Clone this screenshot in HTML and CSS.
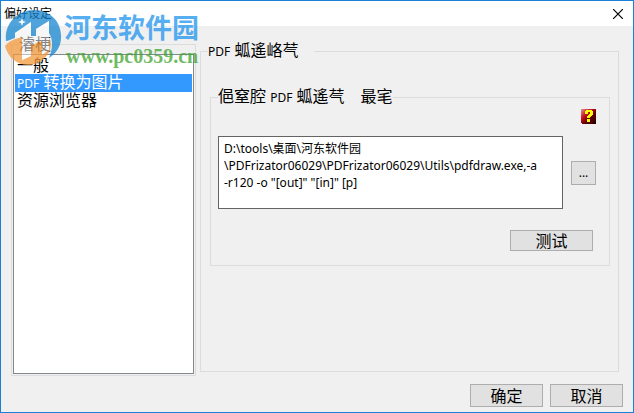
FILE: index.html
```
<!DOCTYPE html>
<html lang="zh-CN">
<head>
    <meta charset="UTF-8">
    <meta name="viewport" content="width=device-width, initial-scale=1.0">
    <title>偏好设定</title>
    <link rel="stylesheet" href="styles.css">
</head>
<body>
    <header class="titlebar">
        <h1>偏好设定</h1>
        <button class="close" type="button" aria-label="关闭">
            <svg width="10" height="10" viewBox="0 0 10 10"><path d="M0 0L10 10M10 0L0 10" stroke="#000" stroke-width="1.2"/></svg>
        </button>
    </header>

    <main class="content">
        <fieldset class="group categories">
            <legend>濬梗</legend>
            <ul class="list" role="listbox" aria-label="濬梗">
                <li role="option">一般</li>
                <li role="option" class="selected" aria-selected="true"><span class="latin">PDF</span> 转换为图片</li>
                <li role="option">资源浏览器</li>
            </ul>
        </fieldset>

        <fieldset class="group settings">
            <legend><span class="latin">PDF</span> 蛌遙峈芞</legend>
            <fieldset class="group program">
                <legend>俋窒腔 <span class="latin">PDF</span> 蛌遙芞　最宒</legend>
                <div class="help-row">
                    <button class="help" type="button" aria-label="帮助">
                        <svg width="15" height="15" viewBox="0 0 15 15">
                            <defs>
                                <linearGradient id="red" x1="0" y1="0" x2="1" y2="1">
                                    <stop offset="0" stop-color="#d99"/>
                                    <stop offset=".35" stop-color="#c8101c"/>
                                    <stop offset=".6" stop-color="#600"/>
                                    <stop offset="1" stop-color="#200"/>
                                </linearGradient>
                            </defs>
                            <path d="M0 0H15V15H1V14H0Z" fill="url(#red)"/>
                            <path d="M4 2H5V1H11V2H12V6H11V7H10V8H9V9H6V7H7V6H8V5H9V3H7V5H4ZM6 10H9V13H6Z" fill="#ff0"/>
                        </svg>
                    </button>
                </div>
                <div class="command-row">
                    <textarea class="command" aria-label="命令行" spellcheck="false">D:\tools\桌面\河东软件园
\PDFrizator06029\PDFrizator06029\Utils\pdfdraw.exe,-a
-r120 -o "[out]" "[in]" [p]</textarea>
                    <button class="btn browse" type="button">...</button>
                </div>
                <button class="btn test" type="button">测试</button>
            </fieldset>
        </fieldset>
    </main>

    <footer class="actions">
        <button class="btn" type="button">确定</button>
        <button class="btn" type="button">取消</button>
    </footer>

    <div class="watermark">
        <svg class="mark" width="60" height="60" viewBox="0 0 60 60">
            <path d="M2 33C0 15 14 2 30 2C47 2 58 15 57 30C57 38 52 46 45 50C49 40 49 31 45 25V13L32 21V28H27V14L11 25V30C7 31 4 33 2 33Z" fill="#1686d0"/>
            <path d="M1 38C5 33 10 31 18 29V52L27 48V37L38 33V47L45 42V30C51 40 42 54 27 57C14 58 4 50 1 38Z" fill="#f39a3c"/>
            <path d="M18 29V52L27 48V37L38 33V47L45 42V13L32 21V28H27V14L11 25V31Z" fill="#fff" fill-opacity=".6"/>
            <path d="M18 10L19 13L22 14L19 15L18 18L17 15L14 14L17 13Z" fill="#fff"/>
        </svg>
        <div>
            <div class="site-name">河东软件园</div>
            <div class="site-url">www.pc0359.cn</div>
        </div>
    </div>
</body>
</html>
```

FILE: styles.css
```
* {
    box-sizing: border-box;
}
body {
    margin: 0;
    min-height: 100vh;
    display: flex;
    flex-direction: column;
    border: 1px solid #1a80d8;
    background: #f0f0f0;
    color: #000;
    font-family: "Noto Sans", "Noto Sans CJK SC", sans-serif;
    font-size: 16px;
    line-height: 17px;
}
button,
textarea {
    font-family: inherit;
    color: inherit;
}
.titlebar {
    display: flex;
    justify-content: space-between;
    align-items: center;
    height: 25px;
    padding: 0 10px 0 3px;
    background: #fff;
}
.titlebar h1 {
    margin: 0;
    font-size: 12px;
    font-weight: normal;
}
.close,
.help {
    display: flex;
    padding: 0;
    border: none;
    background: none;
}
.content {
    flex: 1;
    display: grid;
    grid-template-columns: 185px 1fr;
    gap: 4px;
    padding: 10px 14px 0 10px;
}
.group {
    min-width: 0;
    margin: 0;
    padding: 0;
    border: 1px solid #dcdcdc;
}
.group legend {
    padding: 0;
    white-space: nowrap;
}
.latin {
    font-size: 12px;
}
.categories {
    display: flex;
    flex-direction: column;
    padding: 1px;
}
.categories legend {
    margin-left: 6px;
    color: #222;
}
.list {
    flex: 1;
    margin: 0;
    padding: 2px 1px;
    border: 1px solid #828790;
    background: #fff;
    list-style: none;
}
.list li {
    padding-left: 2px;
}
.list .selected {
    background: #3399ff;
    color: #fff;
}
.settings {
    margin: 6px 0 4px;
    padding: 28px 8px 0 9px;
}
.settings > legend {
    margin-left: -2px;
    padding-right: 16px;
}
.program {
    padding: 3px 13px 14px 7px;
}
.help-row {
    display: flex;
    justify-content: flex-end;
    margin-bottom: 12px;
}
.command-row {
    display: flex;
    align-items: center;
    gap: 8px;
}
.command {
    flex: 1;
    height: 73px;
    padding: 3px 5px;
    border: 1px solid #646464;
    border-radius: 0;
    background: #fff;
    font-size: 12px;
    line-height: 17px;
    resize: none;
    overflow: hidden;
    white-space: pre;
}
.btn {
    width: 73px;
    height: 23px;
    padding: 0;
    border: 1px solid #adadad;
    background: #e1e1e1;
    font-size: 16px;
    line-height: 20px;
}
.browse {
    width: 25px;
    height: 24px;
    font-size: 12px;
}
.test {
    display: block;
    width: 83px;
    height: 21px;
    margin: 21px 3px 0 auto;
    line-height: 18px;
}
.actions {
    display: flex;
    justify-content: flex-end;
    gap: 7px;
    padding: 8px 10px 5px;
}
.watermark {
    position: absolute;
    top: 8px;
    left: 4px;
    display: flex;
    pointer-events: none;
    opacity: 0.75;
}
.site-name {
    margin-top: 2px;
    color: #1f95ee;
    font-size: 27px;
    font-weight: bold;
    line-height: 36px;
}
.site-url {
    padding-left: 2px;
    color: #3fa32e;
    font-family: "Liberation Serif", serif;
    font-size: 20px;
    font-weight: bold;
    line-height: 20px;
}
```
